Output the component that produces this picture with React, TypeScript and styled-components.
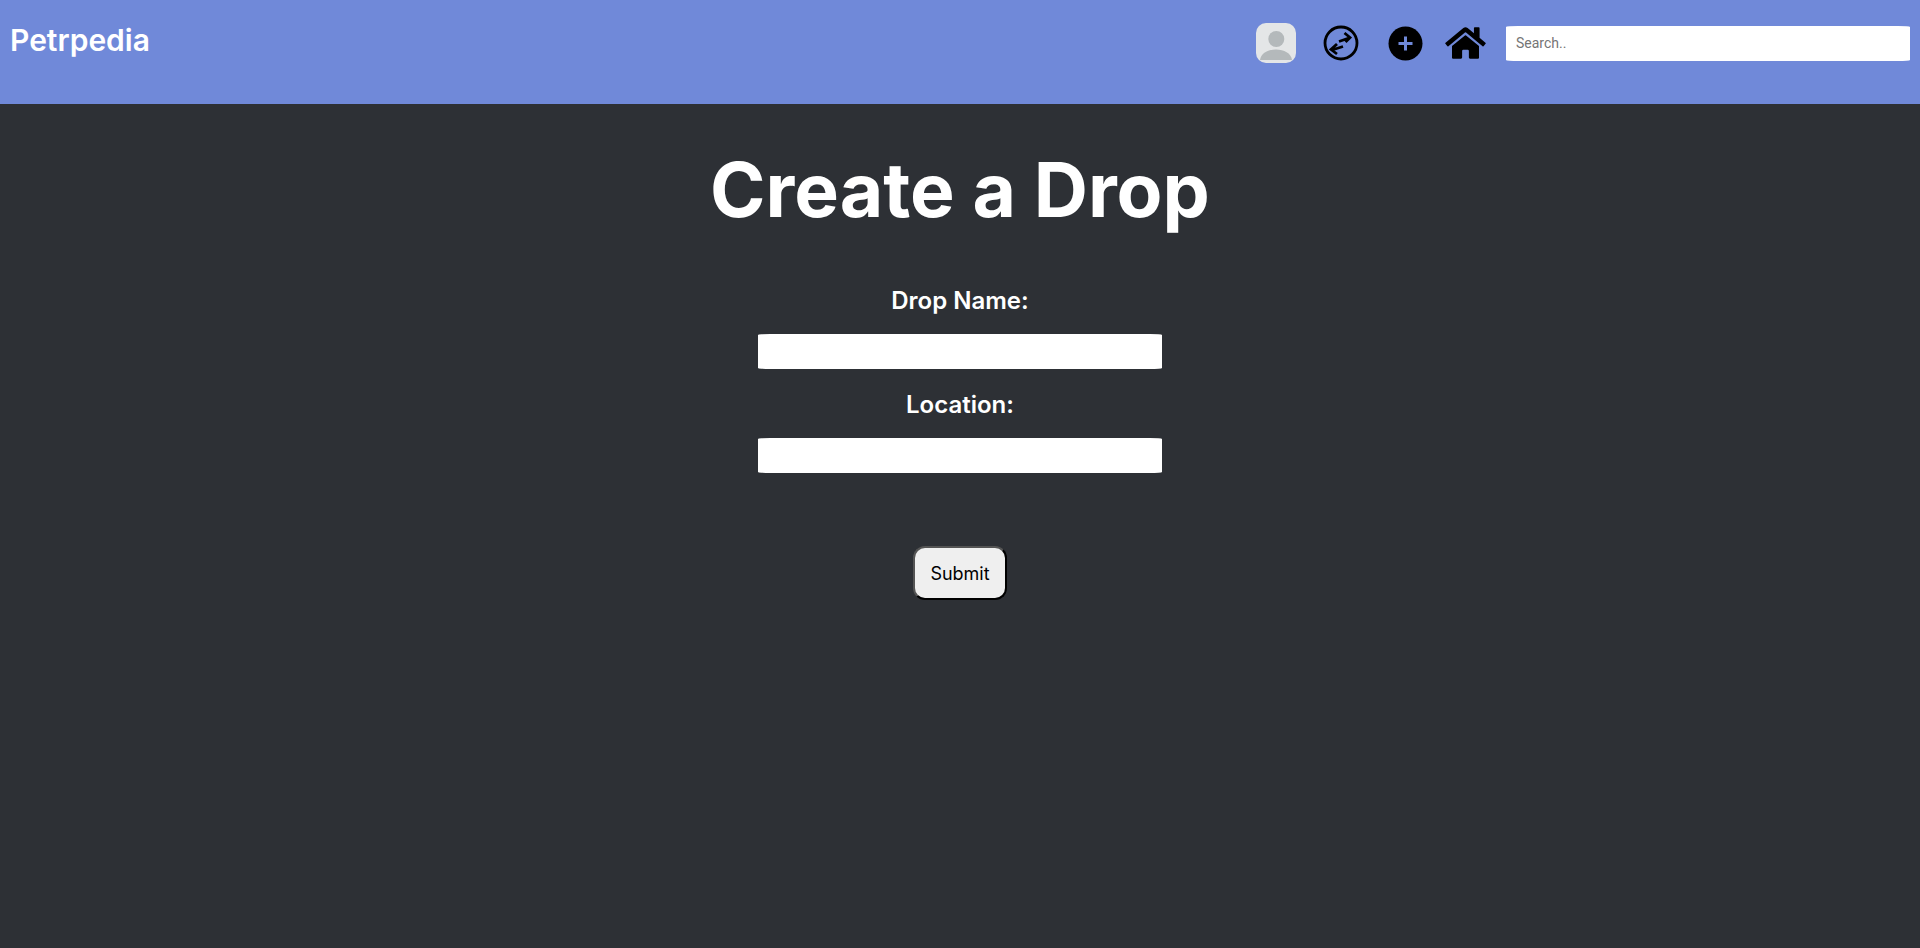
import React, { FunctionComponent } from 'react';
import styled, { createGlobalStyle } from 'styled-components';
import { FaHome } from 'react-icons/fa';

const GlobalStyle = createGlobalStyle`
    html, body {
        margin: 0;
        padding: 0;
        background-color: #2d3035;
        font-family: Inter, "Liberation Sans", sans-serif;
    }
`

const Page = styled.div`
    min-height: 948px;
    background-color: #2d3035;
    display: flex;
    flex-direction: column;
`

const Navbar = styled.nav`
    height: 104px;
    background-color: #7089d9;
    display: flex;
    align-items: flex-start;
    justify-content: space-between;
    padding: 23px 10px 0;
    box-sizing: border-box;
`

const Logo = styled.div`
    color: white;
    font-size: 30px;
    font-weight: 600;
    line-height: 34px;
`

const NavRight = styled.div`
    display: flex;
    align-items: center;
    height: 40px;
`

const Avatar = styled.svg`
    width: 40px;
    height: 40px;
    margin-right: 27px;
    border-radius: 10px;
    background-color: #e4e6e7;
`

const SwapIcon = styled.svg`
    width: 36px;
    height: 36px;
    margin-right: 29px;
`

const AddIcon = styled.svg`
    width: 35px;
    height: 35px;
    margin-right: 22px;
`

const HomeIcon = styled(FaHome)`
    width: 41px;
    height: 36px;
    margin-right: 20px;
    color: black;
`

const SearchInput = styled.input`
    width: 404px;
    height: 35px;
    box-sizing: border-box;
    padding: 0 10px;
    border: none;
    outline: none;
    border-radius: 12px / 1px;
    background-color: white;
    font-family: Roboto, sans-serif;
    font-size: 14px;
    &::placeholder {
        color: #757575;
    }
`

const Main = styled.main`
    display: flex;
    flex-direction: column;
    align-items: center;
`

const Title = styled.h1`
    margin: 42px 0 0;
    color: white;
    font-size: 75px;
    font-weight: 650;
    line-height: 87px;
`

const Form = styled.form`
    margin-top: 53px;
    display: flex;
    flex-direction: column;
    align-items: center;
`

const Label = styled.label`
    color: white;
    font-size: 24px;
    font-weight: 600;
    line-height: 29px;
`

const TextInput = styled.input`
    width: 404px;
    height: 35px;
    box-sizing: border-box;
    margin: 19px 0 21px;
    border: none;
    outline: none;
    border-radius: 12px / 1px;
    background-color: white;
`

const SubmitButton = styled.button`
    margin-top: 52px;
    width: 94px;
    height: 54px;
    box-sizing: border-box;
    border: 2px outset #000;
    border-radius: 12px;
    background-color: #efefef;
    color: black;
    font-family: Inter, sans-serif;
    font-size: 18px;
`

const App: FunctionComponent = () => {
    return (
        <Page>
            <GlobalStyle />
            <Navbar>
                <Logo>Petrpedia</Logo>
                <NavRight>
                    <Avatar viewBox="0 0 40 40">
                        <circle cx="20.3" cy="16" r="8" fill="#b4b9bb" />
                        <path d="M4 37C5 30 12 26.500 20 26.500S35 30 36 37z" fill="#b4b9bb" />
                    </Avatar>
                    <SwapIcon viewBox="0 0 36 36" fill="none" stroke="black" strokeWidth="2.800">
                        <circle cx="18" cy="18" r="16" />
                        <path d="M16 16.500L26 13M21.500 8L27 12.500L22.500 17" />
                        <path d="M20 21.500L9 25M14 19L8 24.500L14 29" />
                    </SwapIcon>
                    <AddIcon viewBox="0 0 35 35">
                        <circle cx="17.500" cy="17.500" r="17" fill="black" />
                        <path d="M17.500 10.500V24.500M10.500 17.500H24.500" stroke="#7089d9" strokeWidth="3" />
                    </AddIcon>
                    <HomeIcon />
                    <SearchInput placeholder="Search.." />
                </NavRight>
            </Navbar>
            <Main>
                <Title>Create a Drop</Title>
                <Form>
                    <Label>Drop Name:</Label>
                    <TextInput />
                    <Label>Location:</Label>
                    <TextInput />
                    <SubmitButton type="button">Submit</SubmitButton>
                </Form>
            </Main>
        </Page>
    );
}

export default App;
